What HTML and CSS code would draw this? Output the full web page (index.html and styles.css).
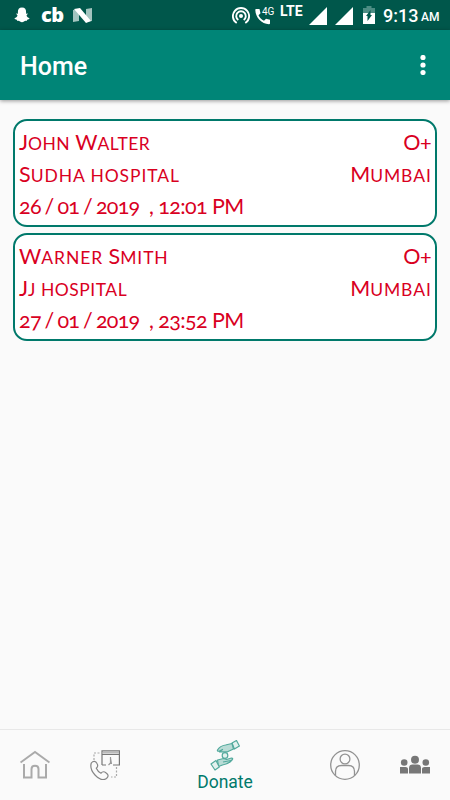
FILE: index.html
```html
<!DOCTYPE html>
<html lang="en">
<head>
    <meta charset="utf-8">
    <title>Home</title>
    <link rel="stylesheet" href="styles.css">
</head>
<body>
<div class="status">
    <svg class="snap" width="16" height="16" viewBox="0 0 16 16"><path fill="#fff" d="M8 .5c3 0 4.200 2 4.100 4.500v1.800l1.900-.2-1.500 1.900c.5 1.500 1.500 2.300 3 2.800-.2 1.300-1.300 1.100-2.300 1.400l-.5 1.200c-1.500-.3-2 .1-2.700.7-1.300 1-2.700 1-4 0-.7-.6-1.200-1-2.700-.7l-.5-1.200c-1-.3-2.100-.1-2.300-1.400 1.500-.5 2.500-1.300 3-2.800L2 6.600l1.900.2V5C3.800 2.500 5 .5 8 .5z"/></svg>
    <span class="cb">cb</span>
    <svg class="nougat" width="19" height="15" viewBox="0 0 19 15"><path fill="#a3c4bf" d="M0 2l6-1v12l-6 1zM13 1l6-1v13l-6 1z"/><path fill="#fff" d="M1 1l6-1 11 13-5 2z"/></svg>
    <svg class="hotspot" width="18" height="18" viewBox="0 0 18 18"><g fill="none" stroke="#fff" stroke-width="1.900"><path d="M4.700 16a8.100 8.100 0 1 1 8.600 0"/><path d="M6.300 13a4.800 4.800 0 1 1 5.400 0"/></g><circle cx="9" cy="9" r="2" fill="#fff"/></svg>
    <svg class="call" width="20" height="19" viewBox="0 0 20 19"><path fill="#fff" d="M1 3h3.500l1 4.200-2 2c1.200 2.500 3 4.300 5.500 5.500l2-2 4 1v3.700c0 .5-.4.8-1 .8C6.500 18 .500 11.500.300 4c0-.6.200-1 .7-1z"/><text x="7" y="9" class="net">4G</text></svg>
    <span class="lte">LTE</span>
    <svg class="signal" width="18" height="18" viewBox="0 0 18 18"><path fill="#fff" d="M18 0v18H0z"/></svg>
    <svg class="signal2" width="18" height="18" viewBox="0 0 18 18"><path fill="#fff" d="M18 0v18H0z"/></svg>
    <svg class="battery" width="12" height="18" viewBox="0 0 12 18"><path fill="#4d8d84" d="M3.500 0h5v2H12v5H0V2h3.500z"/><path fill="#fff" d="M0 7h12v11H0z"/><path fill="#00574b" d="M7.500 4v5H9l-4.500 6v-5H3z"/></svg>
    <span class="time">9:13</span>
    <span class="ampm">AM</span>
</div>
<div class="toolbar">
    <span class="title">Home</span>
    <svg width="6" height="20" viewBox="0 0 6 20"><g fill="#fff"><circle cx="3" cy="2.500" r="2.600"/><circle cx="3" cy="10" r="2.600"/><circle cx="3" cy="17.500" r="2.600"/></g></svg>
</div>
<div class="list">
    <div class="card">
        <div class="row"><span class="john">J<i>ohn</i> W<i>alter</i></span><span class="group">O+</span></div>
        <div class="row"><span class="sudha">S<i>udha hospital</i></span><span class="city">M<i>umbai</i></span></div>
        <div class="row"><span class="date"><span class="day">26 / 01 / 2019</span><span class="hour">, 12:01 PM</span></span></div>
    </div>
    <div class="card">
        <div class="row"><span class="warner">W<i>arner</i> S<i>mith</i></span><span class="group">O+</span></div>
        <div class="row"><span class="jj">J<i>j hospital</i></span><span class="city">M<i>umbai</i></span></div>
        <div class="row"><span class="date"><span class="day">27 / 01 / 2019</span><span class="hour">, 23:52 PM</span></span></div>
    </div>
</div>
<div class="nav">
    <div class="tab home">
        <svg width="30" height="30" viewBox="0 0 30 30"><g fill="none" stroke="#aaa" stroke-width="2"><path d="M.500 12.500L15 2l14.500 10.500"/><path d="M4 14v13.500h7.500V19c0-4.500 7-4.500 7 0v8.500H26V14"/></g></svg>
    </div>
    <div class="tab contact">
        <svg width="30" height="30" viewBox="0 0 30 30"><g fill="none" stroke="#858585" stroke-width="1.200"><path d="M12 15V.800h17.400V15H23M12 15h4M12 4.500h17.400" stroke="#777"/><path d="M13 2.600h16" stroke="#bbb" stroke-width="2"/><path d="M20.500 7v6l-2 2M20.500 8l1 6" stroke="#999"/><path d="M4 10V3h7M26.500 17v10H21" stroke="#aaa" stroke-dasharray="2 1.500"/><path d="M1.300 13c2-2.500 4.500-2 5.700.5 1.200 2 .8 3.500-.7 4.700 1 2.300 2.500 3.800 4.700 5 1.500-2 3.300-1.800 5.200-.2 2.500 1.800 2.500 3.700.3 5.500-3.500 2.500-8 .3-11.500-3.500C1.300 21 .200 16.500 1.300 13z"/></g></svg>
    </div>
    <div class="tab donate">
        <svg width="30" height="31" viewBox="0 0 30 31"><g fill="#b9dcd6" stroke="#52a99c" stroke-width="1.200" stroke-linejoin="round"><path d="M22 3l4.500-2.500L29.400 6l-5 3z" fill="#e3f1ee"/><path d="M22 3.500L15.500 5C12 5.500 9 7.500 7.500 10c-.5 1.200 1 1.500 2 1l3-1.500-3 2.300h8L23.500 9z"/><circle cx="15" cy="15.500" r="2.800" fill="#e3f1ee"/><path d="M7.500 20l6-1.500 3 1 5-1.500c1.500 0 1.500 1 .5 2-2.500 3-5.500 4.500-9.500 5l-4 1.500z"/><path d="M13 22l8-1.500" fill="none"/><path d="M1 24l5-3.500L9.300 27 5 30z" fill="#e3f1ee"/></g></svg>
        <span>Donate</span>
    </div>
    <div class="tab profile">
        <svg width="30" height="30" viewBox="0 0 30 30"><g fill="none" stroke="#929292" stroke-width="1.300"><circle cx="15" cy="15" r="14.300"/><circle cx="15" cy="9" r="4.900"/><path d="M5.500 25.500v-4c0-4 2.500-6 6-6h7c3.500 0 6 2 6 6v4"/></g></svg>
    </div>
    <div class="tab people">
        <svg width="30" height="20" viewBox="0 0 30 20"><g fill="#777"><circle cx="4.200" cy="7.500" r="3.300"/><circle cx="25.800" cy="7.500" r="3.300"/><circle cx="15" cy="4.800" r="4"/><path d="M9 18.500V13c0-2.500 1.500-3.500 3.500-3.500h5c2 0 3.500 1 3.500 3.500v5.500zM0 18.500V12h5.500c1.500 0 2.500.8 2.500 2v4.500zM30 18.500V12h-5.500c-1.500 0-2.500.8-2.500 2v4.500z"/></g></svg>
    </div>
</div>
</body>
</html>
```

FILE: styles.css
```css
*{
    box-sizing:border-box;
}
body{
    margin:0;
    height:800px;
    display:flex;
    flex-direction:column;
    overflow:hidden;
    background-color:#fafafa;
    font-family:Roboto, "Liberation Sans", sans-serif;
}
svg{
    display:block;
    flex:none;
}
.status{
    height:30px;
    flex:none;
    display:flex;
    align-items:flex-start;
    padding:0 0 0 14px;
    background-color:#00574b;
    color:#fff;
    white-space:nowrap;
}
.snap{
    margin-top:7px;
}
.cb{
    width:24px;
    margin:3px 0 0 11px;
    font:800 20px/24px "Open Sans", sans-serif;
    letter-spacing:-.5px;
}
.nougat{
    margin:8px 0 0 8px;
}
.hotspot{
    margin:7px 0 0 140px;
}
.call{
    margin:6px 0 0 5px;
}
.net{
    font:10px Roboto, sans-serif;
    fill:#fff;
}
.lte{
    width:24px;
    margin:4px 0 0 5px;
    font:700 14px/15px Roboto, sans-serif;
}
.signal{
    margin:7px 0 0 5px;
}
.signal2{
    margin:7px 0 0 8px;
}
.battery{
    margin:6px 0 0 10px;
}
.time{
    width:37px;
    margin:5px 0 0 8px;
    font:500 18px/22px Roboto, sans-serif;
}
.ampm{
    margin:10px 0 0 1px;
    font:500 12px/14px Roboto, sans-serif;
}
.toolbar{
    height:70px;
    flex:none;
    display:flex;
    align-items:center;
    justify-content:space-between;
    padding:0 24px 0 20px;
    background-color:#008577;
    box-shadow:0 1px 4px rgba(0,0,0,.4);
}
.title{
    padding-top:3px;
    color:#fff;
    font-size:25px;
    font-weight:500;
}
.list{
    flex:1;
    display:flex;
    flex-direction:column;
    gap:6px;
    padding:19px 13px;
}
.card{
    height:108px;
    padding:5px 4px;
    border:2px solid #00796b;
    border-radius:14px;
    background-color:#fff;
    color:#d9001f;
    font:400 21.500px/32px Lato, sans-serif;
    font-variant-numeric:oldstyle-nums;
    white-space:nowrap;
}
.row{
    height:32px;
    display:flex;
    justify-content:space-between;
}
/* lowercase letters are drawn as smaller capitals */
.card i{
    font-size:17.500px;
    font-style:normal;
    text-transform:uppercase;
    letter-spacing:.9px;
}
.john i{
    letter-spacing:.4px;
}
.jj i{
    letter-spacing:.5px;
}
.city i{
    margin-right:-.7px;
}
.group{
    letter-spacing:-.5px;
}
.date{
    display:flex;
    gap:10px;
}
.day{
    width:120px;
    letter-spacing:-.7px;
    word-spacing:-1px;
}
.hour{
    letter-spacing:-.6px;
}
.nav{
    height:71px;
    flex:none;
    display:flex;
    justify-content:space-between;
    border-top:1px solid #e8e8e8;
    padding:0 20px;
}
.tab{
    width:30px;
    padding-top:20px;
}
.people{
    padding-top:25px;
}
.donate{
    width:130px;
    padding-top:10px;
    display:flex;
    flex-direction:column;
    align-items:center;
    color:#00796b;
    font-size:17.500px;
    line-height:22px;
}
```
